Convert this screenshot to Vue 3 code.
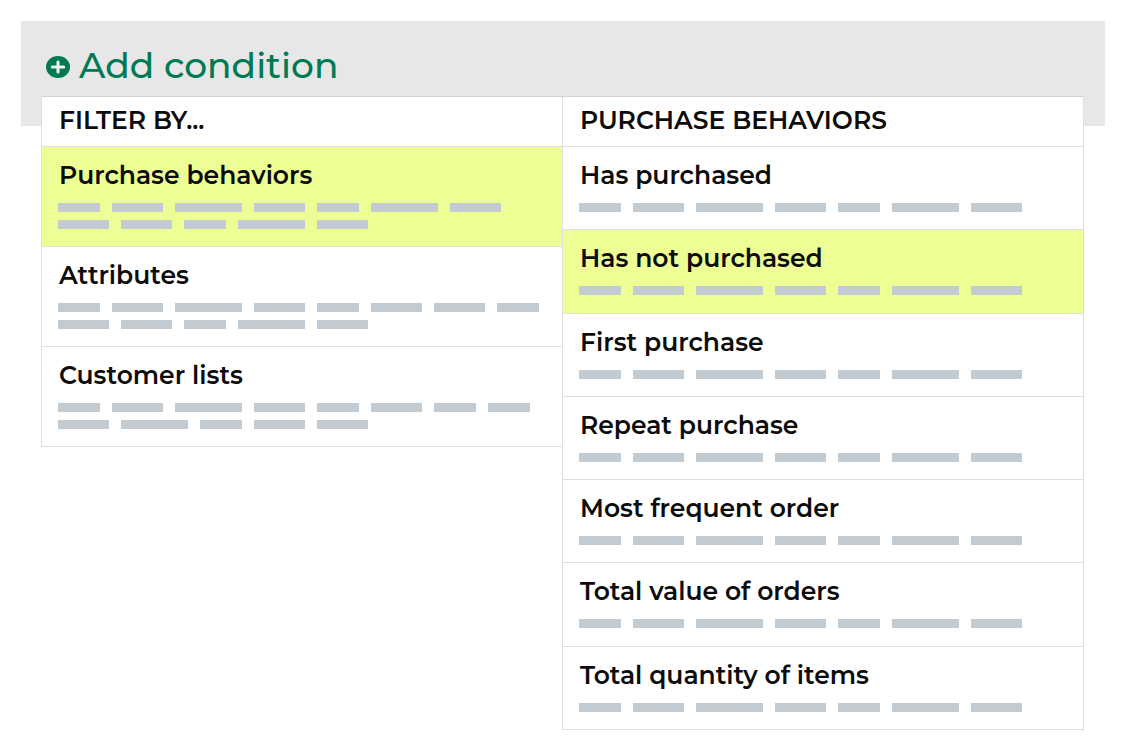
<script setup>
import { ref } from 'vue'

const categories = [
  { name: 'Purchase behaviors', lines: ['smlmslm', 'mmslm'] },
  { name: 'Attributes', lines: ['smlmsmms', 'mmslm'] },
  { name: 'Customer lists', lines: ['smlmsmss', 'mlsmm'] },
]

const behaviors = [
  'Has purchased',
  'Has not purchased',
  'First purchase',
  'Repeat purchase',
  'Most frequent order',
  'Total value of orders',
  'Total quantity of items',
].map((name) => ({ name, lines: ['smlmslm'] }))

const category = ref('Purchase behaviors')
const behavior = ref('Has not purchased')
</script>

<template>
  <main class="page">
    <div class="toolbar">
      <button class="add" type="button">
        <svg class="add-icon" viewBox="0 0 24 22" aria-hidden="true">
          <ellipse cx="12" cy="11" rx="12" ry="11" fill="#007a53" />
          <path d="M12 6v10M6.3 11h11.4" stroke="#f0f0f0" stroke-width="3" stroke-linecap="round" />
        </svg>
        <span>Add condition</span>
      </button>
    </div>

    <div class="menu">
      <section class="column categories">
        <h2 class="heading">FILTER BY...</h2>
        <ul class="list">
          <li v-for="item in categories" :key="item.name" class="entry">
            <button
              type="button"
              class="option"
              :class="{ selected: item.name === category }"
              @click="category = item.name"
            >
              <span class="name">{{ item.name }}</span>
              <span v-for="(line, i) in item.lines" :key="i" class="line">
                <span v-for="(bar, j) in line" :key="j" class="bar" :class="bar"></span>
              </span>
            </button>
          </li>
        </ul>
      </section>

      <section class="column">
        <h2 class="heading">PURCHASE BEHAVIORS</h2>
        <ul class="list">
          <li v-for="item in behaviors" :key="item.name" class="entry">
            <button
              type="button"
              class="option"
              :class="{ selected: item.name === behavior }"
              @click="behavior = item.name"
            >
              <span class="name">{{ item.name }}</span>
              <span v-for="(line, i) in item.lines" :key="i" class="line">
                <span v-for="(bar, j) in line" :key="j" class="bar" :class="bar"></span>
              </span>
            </button>
          </li>
        </ul>
      </section>
    </div>
  </main>
</template>

<style>
body {
  background: #fff;
}
</style>

<style scoped>
.page {
  box-sizing: border-box;
  display: flex;
  flex-direction: column;
  min-height: 100vh;
  padding: 21px;
  font-family: Montserrat, Inter, sans-serif;
  color: #0c0c0c;
}

.toolbar {
  padding: 20px 25px 37px;
  background: #e7e7e7;
}

.add {
  display: flex;
  align-items: center;
  gap: 9px;
  padding: 0;
  border: 0;
  background: none;
  font: inherit;
  font-size: 36px;
  font-weight: 500;
  line-height: 48px;
  color: #007a53;
  cursor: pointer;
}

.add-icon {
  width: 24px;
  height: 22px;
  margin-top: 4px;
}

.menu {
  display: flex;
  flex: 1;
  margin: -30px 21px 0 20px;
}

.column {
  box-sizing: border-box;
  display: flex;
  flex: 1 1 0;
  flex-direction: column;
  min-width: 0;
  border: 1px solid #dee1e4;
  border-top-color: #cdd4d9;
  border-bottom: 0;
  background: #fff;
}

.categories {
  align-self: flex-start;
  border-right: 0;
}

.heading {
  margin: 0;
  padding: 7px 17px 10px;
  border-bottom: 1px solid #dee1e4;
  font-size: 25px;
  font-weight: 600;
  line-height: 32px;
}

.list {
  display: flex;
  flex: 1;
  flex-direction: column;
  margin: 0;
  padding: 0;
  list-style: none;
}

.entry {
  display: flex;
  flex: 1;
  border-bottom: 1px solid #dee1e4;
}

.option {
  display: flex;
  flex: 1;
  flex-direction: column;
  gap: 8px;
  padding: 12px 16px 17px;
  border: 0;
  background: none;
  font: inherit;
  color: inherit;
  text-align: left;
  cursor: pointer;
}

.option.selected {
  background: #edff94;
}

.name {
  margin-bottom: 4px;
  padding-left: 1px;
  font-size: 25px;
  font-weight: 600;
  line-height: 32px;
}

.line {
  display: flex;
  gap: 12px;
}

.bar {
  height: 9px;
  background: #c2cad2;
}

.s {
  width: 42px;
}

.m {
  width: 51px;
}

.l {
  width: 67px;
}
</style>
